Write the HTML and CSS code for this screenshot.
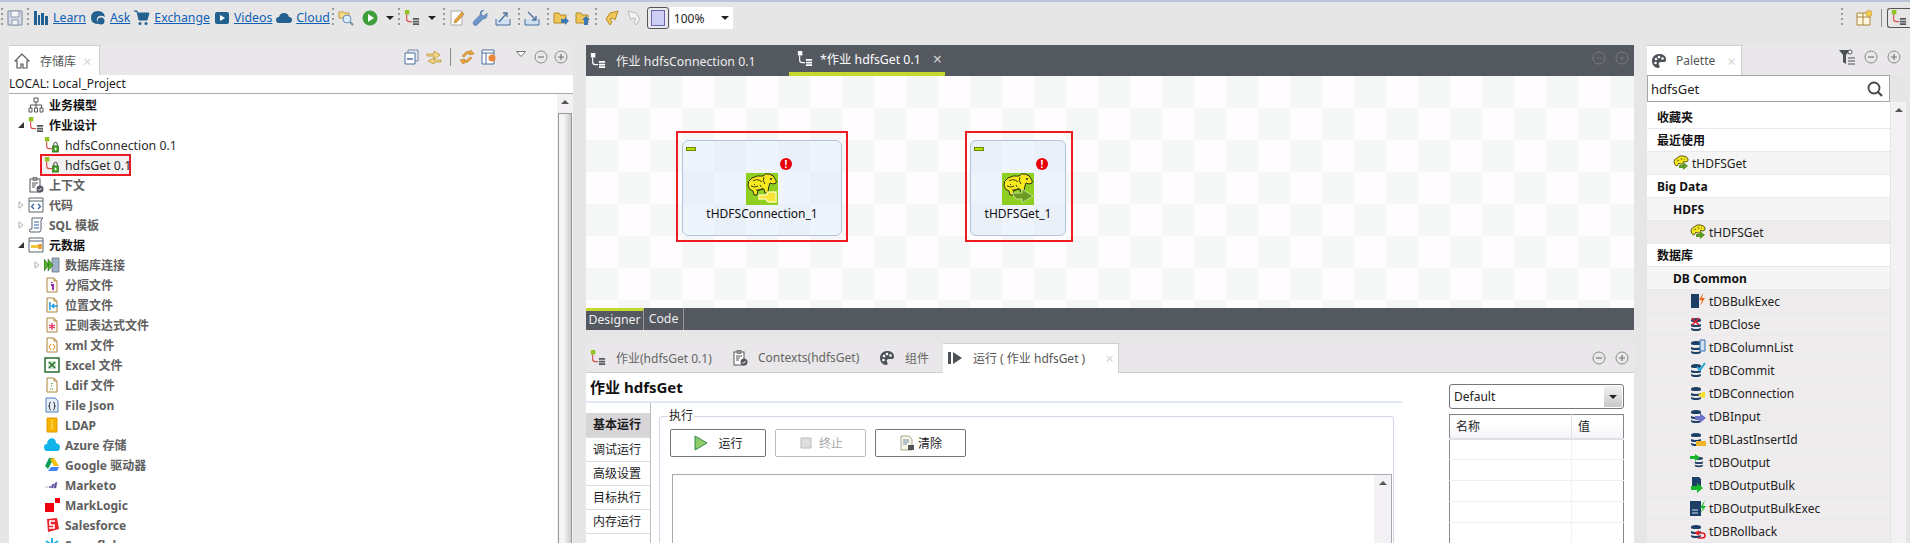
FILE: index.html
```html
<!DOCTYPE html>
<html lang="zh-CN">
  <head>
    <meta charset="utf-8" />
    <title>Talend Open Studio</title>
    <link rel="stylesheet" href="styles.css">
  </head>
  <body>
    <svg class="defs" width="0" height="0">
      <symbol id="job" viewBox="0 0 18 18">
        <rect x="1" y="0" width="5" height="5" fill="#8fc31f" />
        <path d="M3 5v5q0 3 3 3h3" fill="none" stroke="#d9534f" stroke-width="1.3" />
        <path d="M10 9h7v2h-7zM10 12h7v2h-7zM10 15h7v2h-7z" fill="#555a60" />
      </symbol>
      <symbol id="job-white" viewBox="0 0 18 18">
        <rect x="1" y="0" width="5" height="5" fill="#fff" />
        <path d="M3 5v5q0 3 3 3h3" fill="none" stroke="#fff" stroke-width="1.3" />
        <path d="M10 9h7v2h-7zM10 12h7v2h-7zM10 15h7v2h-7z" fill="#fff" />
      </symbol>
      <symbol id="job-lock" viewBox="0 0 18 18">
        <rect x="1" y="0" width="5" height="5" fill="#8fc31f" />
        <path d="M3 5v5q0 3 3 3h3" fill="none" stroke="#d9534f" stroke-width="1.3" />
        <path d="M11 10V8q0-2 2-2t2 2v2" fill="none" stroke="#333" />
        <rect x="9.500" y="10" width="7" height="7" fill="#3d9a1e" stroke="#1d5a0c" stroke-width=".6" />
        <rect x="12" y="12" width="2" height="3" fill="#fff" />
      </symbol>
      <symbol id="doc" viewBox="0 0 16 16">
        <path d="M3 1h7l3 3v11H3z" fill="#fffdf6" stroke="#a9863f" />
        <path d="M10 1v3h3" fill="#e8d6a8" stroke="#a9863f" />
      </symbol>
      <symbol id="db" viewBox="0 0 16 16">
        <path d="M1 4q0-2 5-2t5 2v1q0 1-5 1T1 5zM1 8q2 1 5 1t5-1v2q0 1-5 1t-5-1zM1 12q2 1 5 1t5-1v1q0 2-5 2t-5-2z" fill="#1d3f66" />
      </symbol>
      <symbol id="hadoop" viewBox="0 0 32 32">
        <path d="M2 13q-1-5 4-8 5-3 11-2 2-3 6-2 5 1 6 5 2 2 1 4-3 2-6 0l-1 3q-1 4-1 7h-3l-1-4-6 1-1 5H8l-1-4q-4-1-5-5z" fill="#f6ea1e" stroke="#2e2e12" stroke-width="1" />
        <path d="M7 8q5-3 9 1M5 13q4 2 7 0M10 17q4 1 7-2M18 4q-2 4 1 7M14 12l1 2M8 11l1 1" fill="none" stroke="#2e2e12" stroke-width=".9" />
        <circle cx="25" cy="6" r="1" fill="#222" />
      </symbol>
      <symbol id="hadoop-small" viewBox="0 0 16 16">
        <path d="M1 7q0-3 3-4 3-3 6-2 4 0 5 3 1 2-2 3-2 0-2-1l-1 3H7L6 8 4 11Q1 10 1 7z" fill="#f4e61c" stroke="#4b4b12" stroke-width=".9" />
        <path d="M4 6l2-1M8 3l1 2M11 4h1" stroke="#4b4b12" stroke-width=".8" />
        <path d="M6 10h4V7l5 4-5 4v-2H6z" fill="#5f9a26" />
      </symbol>
      <symbol id="minus" viewBox="0 0 14 14">
        <circle cx="7" cy="7" r="6" fill="none" stroke="#8b8b8b" />
        <path d="M4 7h6" stroke="#777" stroke-width="1.2" />
      </symbol>
      <symbol id="plus" viewBox="0 0 14 14">
        <circle cx="7" cy="7" r="6" fill="none" stroke="#8b8b8b" />
        <path d="M4 7h6M7 4v6" stroke="#777" stroke-width="1.2" />
      </symbol>
      <symbol id="palette" viewBox="0 0 16 16">
        <path d="M8 1C4 1 1 4 1 8s3 7 6 7c2 0 2-2 1-3s0-3 2-3h3c2 0 2-2 2-3 0-3-3-5-7-5z" fill="#4d5158" />
        <circle cx="5" cy="6" r="1.300" fill="#fff" /><circle cx="8" cy="4" r="1.300" fill="#fff" /><circle cx="11.500" cy="5.500" r="1.300" fill="#fff" /><circle cx="4.500" cy="10" r="1.300" fill="#fff" />
      </symbol>
      <symbol id="clip" viewBox="0 0 16 16">
        <rect x="2" y="2" width="10" height="13" fill="#fff" stroke="#555" />
        <rect x="5" y="0.500" width="4" height="3" fill="#999" stroke="#555" stroke-width=".6" />
        <path d="M4 6h6M4 8h4M4 10h3" stroke="#555" />
        <circle cx="12" cy="12" r="3.500" fill="#55595f" />
        <path d="M10.300 12l1.300 1.300 2-2.300" fill="none" stroke="#fff" stroke-width=".9" />
      </symbol>
      <symbol id="tri-open" viewBox="0 0 8 8"><path d="M7 1v6H1z" fill="#333" /></symbol>
      <symbol id="tri-closed" viewBox="0 0 8 10"><path d="M1.500 1l5 4-5 4z" fill="#fff" stroke="#999" /></symbol>
    </svg>

    <header class="toolbar">
      <i class="dots"></i>
      <svg class="ic" viewBox="0 0 16 16"><path d="M1 1h14v14H1z" fill="#d5dbe6" stroke="#7d8ba3" /><path d="M4 1h8v6H4zM5 10h6v5H5z" fill="#f2f4f8" stroke="#8c99ad" /></svg>
      <i class="dots"></i>
      <svg class="ic" viewBox="0 0 16 16"><path d="M1 1h3v14H1zM5 5h2v10H5zM8 3h3v12H8zM12 6h3v9h-3z" fill="#22608f" /></svg>
      <a class="tb-link">Learn</a>
      <svg class="ic" viewBox="0 0 16 16"><path d="M1 8q0-7 7-7 6 0 7 6-3-2-6-1-3 2-2 5l2 3Q1 14 1 8z" fill="#22608f" /><circle cx="11" cy="11" r="3.500" fill="#22608f" /></svg>
      <a class="tb-link">Ask</a>
      <svg class="ic" viewBox="0 0 16 16"><path d="M0 1h3l2 9h8l2-7H4" fill="#22608f" stroke="#22608f" /><circle cx="6" cy="13.500" r="1.500" fill="#22608f" /><circle cx="12" cy="13.500" r="1.500" fill="#22608f" /></svg>
      <a class="tb-link">Exchange</a>
      <svg class="ic" viewBox="0 0 16 16"><rect x="1" y="2" width="14" height="12" rx="2" fill="#22608f" /><path d="M6 5l5 3-5 3z" fill="#fff" /></svg>
      <a class="tb-link">Videos</a>
      <svg class="ic" viewBox="0 0 16 16"><path d="M3 13q-3 0-3-3t3-3q1-4 5-4t5 4q3 0 3 3t-3 3z" fill="#22608f" /></svg>
      <a class="tb-link">Cloud</a>
      <i class="dots tight"></i>
      <svg class="ic" viewBox="0 0 16 16"><path d="M1 2h5l1 1h4v5H1z" fill="#f5d98a" stroke="#c49a3a" /><circle cx="9" cy="9" r="4" fill="#d9ecfa" stroke="#6d8fb0" /><path d="M12 12l3 3" stroke="#6d8fb0" stroke-width="2" /></svg>
      <svg class="ic m4" viewBox="0 0 16 16"><circle cx="8" cy="8" r="7.500" fill="#3f9e3a" /><path d="M6 4l6 4-6 4z" fill="#fff" /></svg>
      <i class="caret m4"></i>
      <i class="dots"></i>
      <svg class="ic"><use href="#job" /></svg>
      <i class="caret m4"></i>
      <i class="dots m3"></i>
      <svg class="ic" viewBox="0 0 16 16"><path d="M2 1h11v14H2z" fill="#fff" stroke="#aaa" /><path d="M13 2l2 2-7 8-3 1 1-3z" fill="#e8a33a" stroke="#a86f1a" stroke-width=".6" /></svg>
      <svg class="ic m3" viewBox="0 0 16 16"><path d="M15 3l-3 3-2-1-1-2 3-3q-4 0-4 4v1L2 11q-2 2 0 4t4-1l5-5q5 0 4-6z" fill="#6d95c9" stroke="#4b6f9f" stroke-width=".5" /></svg>
      <svg class="ic m3" viewBox="0 0 16 16"><path d="M1 9v6h14V9" fill="#cfe0f3" stroke="#4b6f9f" /><path d="M4 12L12 3M8 3h4v4" fill="none" stroke="#4b6f9f" stroke-width="1.300" /></svg>
      <i class="dots m3"></i>
      <svg class="ic" viewBox="0 0 16 16"><path d="M1 9v6h14V9" fill="#cfe0f3" stroke="#4b6f9f" /><path d="M4 2l8 8M12 6v4H8" fill="none" stroke="#4b6f9f" stroke-width="1.300" /></svg>
      <i class="dots m3"></i>
      <svg class="ic" viewBox="0 0 16 16"><path d="M1 3h5l1 2h6v8H1z" fill="#f0c65a" stroke="#b5892a" /><path d="M8 9h4V7l4 4-4 4v-2H8z" fill="#3c78b5" /></svg>
      <svg class="ic m2" viewBox="0 0 16 16"><path d="M1 3h5l1 2h6v8H1z" fill="#f0c65a" stroke="#b5892a" /><path d="M11 6l4 4h-2v5h-4v-5H7z" fill="#3c78b5" /></svg>
      <i class="dots"></i>
      <svg class="ic m3" viewBox="0 0 16 16"><path d="M14 1L6 3 2 9l4 6 2-3-2-3 3-1 2 2z" fill="#f0c65a" stroke="#b5892a" /></svg>
      <svg class="ic m2" viewBox="0 0 16 16"><path d="M2 1l8 2 4 6-4 6-2-3 2-3-3-1-2 2z" fill="#f3f3f3" stroke="#bbb" /></svg>
      <span class="toggle"><i></i></span>
      <span class="zoom-combo">100%<i class="caret"></i></span>
      <span class="tb-end">
        <i class="dots"></i>
        <svg class="ic" viewBox="0 0 16 16"><path d="M1 3h13v12H1z" fill="#fff6dd" stroke="#a9863f" /><path d="M1 7h13M7 3v12" stroke="#a9863f" /><circle cx="13" cy="3.500" r="3" fill="#f5d050" stroke="#b5892a" stroke-width=".6" /></svg>
        <i class="tb-sep"></i>
        <span class="persp"><svg class="ic"><use href="#job" /></svg></span>
      </span>
    </header>

    <main class="workbench">
      <section class="repo">
        <div class="view-head">
          <div class="view-tab repo-tab">
            <svg class="ic" viewBox="0 0 16 16"><path d="M8 1L1 8h2v7h4v-4h2v4h4V8h2z" fill="#fff" stroke="#555" stroke-width="1.200" /></svg>
            <span>存储库</span>
            <span class="tab-x">×</span>
          </div>
          <div class="view-actions repo-actions">
            <svg class="ic" viewBox="0 0 16 16"><path d="M4 1h10v11H4z" fill="#dfe8f3" stroke="#7d8ba3" /><path d="M1 4h10v11H1z" fill="#fff" stroke="#4b6f9f" /><path d="M3 10h6" stroke="#4b6f9f" stroke-width="1.500" /></svg>
            <svg class="ic" viewBox="0 0 16 16"><path d="M1 5h7V2l6 4-6 4V7H1zM15 11H8V9l-6 3 6 3v-2h7z" fill="#f5d98a" stroke="#b5892a" stroke-width=".7" /></svg>
            <i class="tb-sep short"></i>
            <svg class="ic" viewBox="0 0 16 16"><path d="M12 1l3 4-5 1 1-2-3 1-3 3-2-1 4-4 4-1zM4 15l-3-4 5-1-1 2 3-1 3-3 2 1-4 4-4 1z" fill="#e8a33a" stroke="#a86f1a" stroke-width=".5" /></svg>
            <svg class="ic" viewBox="0 0 16 16"><path d="M1 1h12v14H1z" fill="#fff" stroke="#4b6f9f" /><path d="M1 4h12M5 4v11" stroke="#4b6f9f" /><circle cx="11" cy="9" r="3.500" fill="#e8833a" /></svg>
            <svg class="tri-menu" viewBox="0 0 10 6"><path d="M.5.500h9L5 5.500z" fill="#fff" stroke="#777" /></svg>
            <svg class="btn-ic"><use href="#minus" /></svg>
            <svg class="btn-ic"><use href="#plus" /></svg>
          </div>
        </div>
        <div class="repo-path">LOCAL: Local_Project</div>
        <div class="tree-wrap">
          <div class="tree">
            <div class="row l0"><i class="tw"></i><svg class="ic" viewBox="0 0 16 16"><path d="M6 1h4v4H6zM1 11h3v4H1zM6.500 11h3v4h-3zM12 11h3v4h-3zM8 5v3M2.500 11V8h11v3M8 8v3" fill="#fff" stroke="#555" /></svg><b>业务模型</b></div>
            <div class="row l0"><svg class="tw"><use href="#tri-open" /></svg><svg class="ic"><use href="#job" /></svg><b>作业设计</b></div>
            <div class="row l1"><i class="tw"></i><svg class="ic"><use href="#job-lock" /></svg><span>hdfsConnection 0.1</span></div>
            <div class="row l1"><i class="tw"></i><span class="marked"><svg class="ic"><use href="#job-lock" /></svg><span>hdfsGet 0.1</span></span></div>
            <div class="row l0 dim"><i class="tw"></i><svg class="ic"><use href="#clip" /></svg><b>上下文</b></div>
            <div class="row l0 dim"><svg class="tw"><use href="#tri-closed" /></svg><svg class="ic" viewBox="0 0 16 16"><path d="M1 1h14v14H1z" fill="#fff" stroke="#5a6470" /><path d="M1 4h14" stroke="#5a6470" /><path d="M6 7L3.500 9.500 6 12M10 7l2.500 2.500L10 12" fill="none" stroke="#2a5f9e" stroke-width="1.200" /></svg><b>代码</b></div>
            <div class="row l0 dim"><svg class="tw"><use href="#tri-closed" /></svg><svg class="ic" viewBox="0 0 16 16"><path d="M4 1h11l-2 2v10q0 2-2 2H2q-1-1 0-3h2z" fill="#fff" stroke="#5a6470" /><path d="M6 5h5M6 8h5M6 11h5" stroke="#2a5f9e" /></svg><b>SQL 模板</b></div>
            <div class="row l0"><svg class="tw"><use href="#tri-open" /></svg><svg class="ic" viewBox="0 0 16 16"><path d="M1 1h14v14H1z" fill="#fff" stroke="#5a6470" /><path d="M1 4h14" stroke="#5a6470" /><path d="M3 8h7v3H3z" fill="#f5c53a" /><path d="M10 7h4v5h-4z" fill="#e8a33a" /></svg><b>元数据</b></div>
            <div class="row l1 dim"><svg class="tw"><use href="#tri-closed" /></svg><svg class="ic" viewBox="0 0 16 16"><path d="M8 1h7v14H8z" fill="#9fb2c9" stroke="#5a6470" stroke-width=".7" /><path d="M0 2l5 6-5 6zM4 2l5 6-5 6z" fill="#4fae2e" stroke="#1d5a0c" stroke-width=".5" /></svg><b>数据库连接</b></div>
            <div class="row l1 dim"><i class="tw"></i><svg class="ic" viewBox="0 0 16 16"><use href="#doc" /><path d="M8 5v1M7 8h2v5" fill="none" stroke="#8a1ea8" stroke-width="1.800" /></svg><b>分隔文件</b></div>
            <div class="row l1 dim"><i class="tw"></i><svg class="ic" viewBox="0 0 16 16"><use href="#doc" /><path d="M6 5v8M14 9H8m2-2-2 2 2 2" fill="none" stroke="#1e9be0" stroke-width="1.500" /></svg><b>位置文件</b></div>
            <div class="row l1 dim"><i class="tw"></i><svg class="ic" viewBox="0 0 16 16"><use href="#doc" /><path d="M8 6v7M5 8l6 3M5 11l6-3" stroke="#e0245e" stroke-width="1.200" /></svg><b>正则表达式文件</b></div>
            <div class="row l1 dim"><i class="tw"></i><svg class="ic" viewBox="0 0 16 16"><use href="#doc" /><path d="M7 7L5 10l2 3M9 7l2 3-2 3" fill="none" stroke="#d08a1e" /></svg><b>xml 文件</b></div>
            <div class="row l1 dim"><i class="tw"></i><svg class="ic" viewBox="0 0 16 16"><path d="M1 1h14v14H1z" fill="#fff" stroke="#2c6e2f" stroke-width="1.500" /><path d="M4 4h8v8H4z" fill="#cfe6cf" /><path d="M5 5l6 6M11 5l-6 6" stroke="#2c6e2f" stroke-width="1.600" /></svg><b>Excel 文件</b></div>
            <div class="row l1 dim"><i class="tw"></i><svg class="ic" viewBox="0 0 16 16"><use href="#doc" /><path d="M8 6v1M7 9h2M6 12h4" stroke="#2c8a2f" stroke-width="1.200" stroke-dasharray="1 1" /></svg><b>Ldif 文件</b></div>
            <div class="row l1 dim"><i class="tw"></i><svg class="ic" viewBox="0 0 16 16"><path d="M2 1h9l3 3v11H2z" fill="#e4edf8" stroke="#4b7fc0" /><path d="M7 5Q5 5 5.500 8T4.500 9q1 0 1 2t1.500 2M9 5q2 0 1.500 3t1 1q-1 0-1 2T9 13" fill="none" stroke="#333" stroke-width=".9" /></svg><b>File Json</b></div>
            <div class="row l1 dim"><i class="tw"></i><svg class="ic" viewBox="0 0 16 16"><path d="M3 1h10v14H3z" fill="#f7b500" stroke="#e09a00" /><path d="M8 3v10" stroke="#ffe082" stroke-dasharray="1 1" stroke-width="2" /></svg><b>LDAP</b></div>
            <div class="row l1 dim"><i class="tw"></i><svg class="ic" viewBox="0 0 16 16"><path d="M3 14q-3 0-3-4 0-3 3-3 0-5 5-6 4 1 4 5 4 1 4 4 0 4-3 4z" fill="#12b5ea" /></svg><b>Azure 存储</b></div>
            <div class="row l1 dim"><i class="tw"></i><svg class="ic" viewBox="0 0 16 16"><path d="M5 1h5L4 12 1 9z" fill="#0f9d58" /><path d="M10 1l5 8h-5L6 2z" fill="#f4c20d" /><path d="M4 14l3-4h8l-2 4z" fill="#4285f4" /></svg><b>Google 驱动器</b></div>
            <div class="row l1 dim"><i class="tw"></i><svg class="ic" viewBox="0 0 16 16"><path d="M1 10h3M5 9.500h2v1H5zM8 7.500l2-.5-1 4H7.500zM11 6l2-1-1 6h-2z" fill="#5c4c9f" stroke="#5c4c9f" stroke-width=".4" /></svg><b>Marketo</b></div>
            <div class="row l1 dim"><i class="tw"></i><svg class="ic" viewBox="0 0 16 16"><path d="M1 6h9v9H1zM11 1h5v5h-5z" fill="#f0000f" /></svg><b>MarkLogic</b></div>
            <div class="row l1 dim"><i class="tw"></i><svg class="ic" viewBox="0 0 16 16"><path d="M3 2l10-1 2 11-11 3z" fill="#e8232a" /><path d="M11 4H6v4h4v3H5" fill="none" stroke="#fff" stroke-width="1.600" /></svg><b>Salesforce</b></div>
            <div class="row l1 dim"><i class="tw"></i><svg class="ic" viewBox="0 0 16 16"><path d="M8 1v14M2 4l12 8M14 4L2 12" stroke="#29b5e8" stroke-width="2" /></svg><b>Snowflake</b></div>
          </div>
          <div class="vscroll">
            <i class="up"></i>
            <i class="thumb"></i>
          </div>
        </div>
      </section>

      <section class="center">
        <div class="editor">
          <div class="editor-tabs">
            <div class="ed-tab">
              <svg class="ic"><use href="#job-white" /></svg>
              <span>作业 hdfsConnection 0.1</span>
            </div>
            <div class="ed-tab active">
              <svg class="ic"><use href="#job-white" /></svg>
              <span>*作业 hdfsGet 0.1</span>
              <span class="ed-x">×</span>
            </div>
            <div class="ed-actions">
              <svg class="btn-ic"><use href="#minus" /></svg>
              <svg class="btn-ic"><use href="#plus" /></svg>
            </div>
          </div>
          <div class="canvas">
            <div class="mark mark-conn">
              <div class="node">
                <i class="node-bar"></i>
                <i class="node-err">!</i>
                <svg class="node-icon" viewBox="0 0 32 32">
                  <rect width="32" height="32" fill="#8ecf1f" />
                  <use href="#hadoop" width="32" height="32" />
                  <path d="M13 22h7l2-3h8v10h-8l-2-3h-7z" fill="#f6e43a" stroke="#fdf7a8" stroke-width="1.500" />
                </svg>
                <span class="node-label">tHDFSConnection_1</span>
              </div>
            </div>
            <div class="mark mark-get">
              <div class="node">
                <i class="node-bar"></i>
                <i class="node-err">!</i>
                <svg class="node-icon" viewBox="0 0 32 32">
                  <rect width="32" height="32" fill="#8ecf1f" />
                  <use href="#hadoop" width="32" height="32" />
                  <path d="M10 20h10v-4l11 7-11 7v-4h-6z" fill="#6b9b22" stroke="#c5e38a" />
                </svg>
                <span class="node-label">tHDFSGet_1</span>
              </div>
            </div>
          </div>
          <div class="editor-foot">
            <span class="foot-tab active">Designer</span>
            <span class="foot-tab code">Code</span>
          </div>
        </div>

        <div class="run-view">
          <div class="view-head run-head">
            <div class="run-tab">
              <svg class="ic"><use href="#job" /></svg>
              <span>作业(hdfsGet 0.1)</span>
            </div>
            <div class="run-tab">
              <svg class="ic"><use href="#clip" /></svg>
              <span>Contexts(hdfsGet)</span>
            </div>
            <div class="run-tab">
              <svg class="ic"><use href="#palette" /></svg>
              <span>组件</span>
            </div>
            <div class="view-tab run-active">
              <svg class="ic" viewBox="0 0 16 16"><path d="M1 2h3v12H1zM6 2l9 6-9 6z" fill="#4d5158" /></svg>
              <span>运行 ( 作业 hdfsGet )</span>
              <span class="tab-x">×</span>
            </div>
            <div class="view-actions run-actions">
              <svg class="btn-ic"><use href="#minus" /></svg>
              <svg class="btn-ic"><use href="#plus" /></svg>
            </div>
          </div>
          <div class="run-body">
            <div class="run-left">
              <h2 class="run-title">作业 hdfsGet</h2>
              <div class="run-split">
                <ul class="side-tabs">
                  <li class="selected">基本运行</li>
                  <li>调试运行</li>
                  <li>高级设置</li>
                  <li>目标执行</li>
                  <li>内存运行</li>
                </ul>
                <fieldset class="exec">
                  <legend>执行</legend>
                  <div class="exec-btns">
                    <button class="btn btn-run"><svg class="ic" viewBox="0 0 16 16"><path d="M2 1l12 7-12 7z" fill="#8ecb6a" stroke="#2f8a4e" /></svg>运行</button>
                    <button class="btn btn-stop" disabled><svg class="ic" viewBox="0 0 16 16"><path d="M3 3h10v10H3z" fill="#ddd" stroke="#bbb" /></svg>终止</button>
                    <button class="btn btn-clear"><svg class="ic" viewBox="0 0 16 16"><path d="M2 1h8l3 3v11H2z" fill="#f8f4e6" stroke="#a9a48f" /><path d="M4 5h6M4 7h6M4 9h4" stroke="#6d8fb0" /><path d="M9 10h6v5H9z" fill="#555" /></svg>清除</button>
                  </div>
                  <div class="console">
                    <div class="vscroll thin"><i class="up"></i></div>
                  </div>
                </fieldset>
              </div>
            </div>
            <div class="run-right">
              <div class="combo">Default<i class="combo-btn"><i class="caret"></i></i></div>
              <table class="ctx-table">
                <tr><th class="c-name">名称</th><th>值</th></tr>
                <tr><td></td><td></td></tr>
                <tr><td></td><td></td></tr>
                <tr><td></td><td></td></tr>
                <tr><td></td><td></td></tr>
                <tr><td></td><td></td></tr>
              </table>
            </div>
          </div>
        </div>
      </section>

      <section class="palette">
        <div class="view-head">
          <div class="view-tab pal-tab">
            <svg class="ic"><use href="#palette" /></svg>
            <span>Palette</span>
            <span class="tab-x">×</span>
          </div>
          <div class="view-actions pal-actions">
            <svg class="ic" viewBox="0 0 16 16"><path d="M0 1h11L7 6v9L4 13V6z" fill="#4d5158" /><circle cx="11" cy="3" r="2" fill="#fff" stroke="#4d5158" /><path d="M9 9h7M9 12h7M9 15h7" stroke="#4d5158" /></svg>
            <svg class="btn-ic"><use href="#minus" /></svg>
            <svg class="btn-ic"><use href="#plus" /></svg>
          </div>
        </div>
        <div class="pal-search">
          <span>hdfsGet</span>
          <svg class="ic" viewBox="0 0 16 16"><circle cx="7" cy="7" r="5.500" fill="none" stroke="#444" stroke-width="1.800" /><path d="M11 11l4 4" stroke="#444" stroke-width="2.200" /></svg>
        </div>
        <div class="pal-wrap">
          <div class="pal-list">
            <div class="pal-row"><b>收藏夹</b></div>
            <div class="pal-row"><b>最近使用</b></div>
            <div class="pal-row item-soft p1"><svg class="ic"><use href="#hadoop-small" /></svg>tHDFSGet</div>
            <div class="pal-row"><b>Big Data</b></div>
            <div class="pal-row p1 soft"><b>HDFS</b></div>
            <div class="pal-row item p2"><svg class="ic"><use href="#hadoop-small" /></svg>tHDFSGet</div>
            <div class="pal-row"><b>数据库</b></div>
            <div class="pal-row p1 soft"><b>DB Common</b></div>
            <div class="pal-row item p2"><svg class="ic" viewBox="0 0 16 16"><path d="M1 1h8v14H1z" fill="#1d3f66" /><path d="M13 0l-4 7h3l-2 6 5-8h-3z" fill="#ee6a1f" /></svg>tDBBulkExec</div>
            <div class="pal-row item p2"><svg class="ic" viewBox="0 0 16 16"><use href="#db" /><path d="M2 2l7 7M9 2L2 9" stroke="#e0202a" stroke-width="1.500" /></svg>tDBClose</div>
            <div class="pal-row item p2"><svg class="ic" viewBox="0 0 16 16"><use href="#db" /><path d="M10 1h5v11h-5z" fill="#cfe0f3" stroke="#2f6fae" /></svg>tDBColumnList</div>
            <div class="pal-row item p2"><svg class="ic" viewBox="0 0 16 16"><use href="#db" /><path d="M7 5l3 3 5-7" fill="none" stroke="#2aa4d8" stroke-width="2" /></svg>tDBCommit</div>
            <div class="pal-row item p2"><svg class="ic" viewBox="0 0 16 16"><use href="#db" /><path d="M8 10l5-3h2v6h-2z" fill="#f5e02a" /></svg>tDBConnection</div>
            <div class="pal-row item p2"><svg class="ic" viewBox="0 0 16 16"><use href="#db" /><path d="M5 8h5V5l6 5-6 5v-3H5z" fill="#6f72c9" /></svg>tDBInput</div>
            <div class="pal-row item p2"><svg class="ic" viewBox="0 0 16 16"><use href="#db" /><path d="M6 10h10v5H6z" fill="#f0b428" /></svg>tDBLastInsertId</div>
            <div class="pal-row item p2"><svg class="ic" viewBox="0 0 16 16"><g transform="translate(4 1)"><use href="#db" width="13" height="13" /></g><path d="M0 2h5V0l5 3.500L5 7V5H0z" fill="#18b82a" /></svg>tDBOutput</div>
            <div class="pal-row item p2"><svg class="ic" viewBox="0 0 16 16"><path d="M2 0h7l2 2v10H2z" fill="#1d3f66" /><path d="M1 9h6V6l6 5-6 5v-3H1z" fill="#18b82a" /></svg>tDBOutputBulk</div>
            <div class="pal-row item p2"><svg class="ic" viewBox="0 0 16 16"><path d="M0 1h11v15H0z" fill="#1d3f66" /><path d="M2 10h6M2 13h6" stroke="#cfe0f3" /><path d="M15 0l-5 8h3l-3 6 6-8h-3z" fill="#18b82a" /></svg>tDBOutputBulkExec</div>
            <div class="pal-row item p2"><svg class="ic" viewBox="0 0 16 16"><use href="#db" /><path d="M7 10h5q3 0 3 2.500T12 15H8M9 8l-3 2 3 2" fill="none" stroke="#e0202a" stroke-width="1.600" /></svg>tDBRollback</div>
          </div>
          <div class="vscroll pal-scroll"><i class="up"></i></div>
        </div>
      </section>
    </main>
  </body>
</html>
```

FILE: styles.css
```css
* {
  box-sizing: border-box;
}

html,
body {
  width: 1910px;
  height: 543px;
  margin: 0;
  overflow: hidden;
}

body {
  background: #e6e6e6;
  color: #1c1c1c;
  font-family: "Noto Sans", "Noto Sans CJK SC", sans-serif;
  font-size: 12px;
}

i {
  font-style: normal;
}

.defs {
  position: absolute;
}

.ic {
  flex: none;
  width: 16px;
  height: 16px;
}

.btn-ic {
  flex: none;
  width: 14px;
  height: 14px;
}

/* toolbar */
.toolbar {
  display: flex;
  align-items: center;
  gap: 4px;
  height: 45px;
  padding: 0 0 11px 1px;
  border-top: 2px solid #bcc5da;
}

.dots {
  flex: none;
  width: 2px;
  height: 20px;
  background: repeating-linear-gradient(#9a9a9a 0 2px, transparent 2px 5px);
}

.dots.tight {
  margin-left: -2px;
}

.tb-link {
  color: #0f5fb5;
  font-size: 12.300px;
  line-height: 16px;
  text-decoration: underline;
}

.m2 {
  margin-left: 2px;
}

.m3 {
  margin-left: 3px;
}

.m4 {
  margin-left: 4px;
}

.caret {
  display: block;
  flex: none;
  width: 0;
  height: 0;
  border-top: 4px solid #222;
  border-right: 4px solid transparent;
  border-left: 4px solid transparent;
}

.toggle {
  display: flex;
  flex: none;
  align-items: center;
  justify-content: center;
  width: 22px;
  height: 22px;
  margin-left: 1px;
  border: 1px solid #555;
  border-radius: 3px;
  background: #e9e9ee;
}

.toggle i {
  width: 14px;
  height: 16px;
  border: 1px solid #6a6ab0;
  background: #cfcff5;
}

.zoom-combo {
  display: flex;
  flex: none;
  align-items: center;
  justify-content: space-between;
  width: 63px;
  height: 22px;
  margin-left: -3px;
  padding: 0 4px;
  background: #fff;
}

.tb-end {
  display: flex;
  align-items: center;
  gap: 9px;
  margin-left: auto;
}

.tb-end .ic {
  margin-left: 4px;
}

.persp .ic {
  margin-left: 0;
}

.tb-sep {
  flex: none;
  width: 1px;
  height: 18px;
  background: #8c8c8c;
}

.tb-sep.short {
  margin: 0 2px;
}

.persp {
  display: flex;
  align-items: center;
  width: 23px;
  height: 20px;
  margin-left: -4px;
  padding-left: 3px;
  border: 1px solid #555;
  border-right: 0;
  border-radius: 3px 0 0 3px;
}

/* layout */
.workbench {
  display: flex;
  height: 498px;
  padding-left: 9px;
}

.repo {
  display: flex;
  flex: none;
  flex-direction: column;
  width: 564px;
}

.center {
  display: flex;
  flex: none;
  flex-direction: column;
  width: 1048px;
  margin-left: 13px;
}

.palette {
  display: flex;
  flex: none;
  flex-direction: column;
  width: 260px;
  margin-left: 13px;
}

.view-head {
  display: flex;
  flex: none;
  height: 30px;
  background: #e9e7e9;
}

.view-tab {
  display: flex;
  flex: none;
  align-items: center;
  height: 30px;
  border: 1px solid #cfcfcf;
  border-width: 1px 1px 0 0;
  background: #fff;
  color: #555;
  white-space: nowrap;
}

.tab-x {
  color: #d5d5d5;
  font-size: 15px;
}

.view-actions {
  display: flex;
  align-items: center;
  margin-left: auto;
  height: 24px;
}

/* repository */
.repo-tab {
  width: 91px;
  padding-left: 5px;
  gap: 10px;
}

.repo-tab .tab-x {
  margin-left: -3px;
}

.repo-actions {
  gap: 6px;
  padding-right: 5px;
}

.tri-menu {
  width: 10px;
  height: 6px;
  margin: 0 2px 6px 13px;
}

.repo-path {
  flex: none;
  height: 19px;
  border-bottom: 1px solid #a9a9a9;
  background: #fff;
  line-height: 18px;
}

.tree-wrap {
  display: flex;
  flex: 1;
  min-height: 0;
  background: #fff;
  overflow: hidden;
}

.tree {
  flex: 1;
  padding-top: 1px;
}

.row {
  display: flex;
  align-items: center;
  height: 20px;
  font-size: 12px;
  white-space: nowrap;
}

.row .ic {
  margin-right: 5px;
}

.row b {
  color: #111;
}

.row.dim b {
  color: #606060;
}

.row span {
  color: #2a2a2a;
  font-size: 12.300px;
}

.tw {
  flex: none;
  width: 8px;
  height: 8px;
  margin-right: 3px;
}

.l0 {
  padding-left: 8px;
}

.l1 {
  padding-left: 24px;
}

.row .marked {
  display: flex;
  align-items: center;
  width: 87px;
  height: 18px;
  margin-left: -2px;
  padding-left: 2px;
  outline: 2px solid #ed1c24;
  background: #f1f1f1;
}

.vscroll {
  flex: none;
  position: relative;
  width: 16px;
  background: #f3f1f3;
}

.vscroll .up {
  display: block;
  width: 0;
  margin: 6px auto 0;
  border-right: 4px solid transparent;
  border-bottom: 4px solid #555;
  border-left: 4px solid transparent;
}

.vscroll .thumb {
  display: block;
  height: 440px;
  margin: 9px 1px 0 1px;
  border: 1px solid #999;
  background: linear-gradient(90deg, #f6f5f6 40%, #c9c9cf);
}

/* editor */
.editor {
  display: flex;
  flex: none;
  flex-direction: column;
  height: 285px;
}

.editor-tabs {
  display: flex;
  flex: none;
  height: 31px;
  background: #54585f;
  color: #eee;
  font-size: 12.300px;
}

.ed-tab {
  display: flex;
  align-items: center;
  gap: 10px;
  width: 203px;
  padding-left: 4px;
  white-space: nowrap;
}

.ed-tab.active {
  gap: 7px;
  width: 156px;
  padding-left: 8px;
  border-bottom: 4px solid #c4d82e;
  color: #fff;
}

.ed-x {
  margin-left: 5px;
  color: #d0d0d0;
  font-size: 16px;
}

.ed-actions {
  display: flex;
  align-items: center;
  gap: 9px;
  margin-left: auto;
  padding-right: 5px;
  padding-bottom: 6px;
}

.ed-actions .btn-ic {
  opacity: .7;
}

.canvas {
  position: relative;
  flex: 1;
  background: repeating-conic-gradient(#fffcff 0 25%, #f5f7f6 0 50%) 0 0 / 64px 64px;
}

.mark {
  position: absolute;
  top: 55px;
  height: 111px;
  padding-top: 7px;
  border: 2px solid #ed1c24;
}

.mark-conn {
  left: 90px;
  width: 172px;
  padding-left: 4px;
}

.mark-get {
  left: 379px;
  width: 108px;
  padding-left: 3px;
}

.node {
  position: relative;
  display: flex;
  flex-direction: column;
  align-items: center;
  height: 96px;
  padding-top: 32px;
  border: 1px solid #b4c6dc;
  border-radius: 6px;
  background: rgba(222, 234, 250, .5);
}

.mark-conn .node {
  width: 160px;
}

.mark-get .node {
  width: 96px;
}

.node-bar {
  position: absolute;
  top: 6px;
  left: 3px;
  width: 10px;
  height: 4px;
  border: 1px solid #6f8a00;
  background: #b5e200;
}

.node-err {
  position: absolute;
  top: 17px;
  width: 12px;
  height: 12px;
  border-radius: 50%;
  background: #e8000b;
  color: #fff;
  font-size: 10px;
  font-weight: 700;
  line-height: 12px;
  text-align: center;
}

.mark-conn .node-err {
  right: 49px;
}

.mark-get .node-err {
  right: 17px;
}

.node-icon {
  flex: none;
  width: 32px;
  height: 32px;
}

.node-label {
  color: #111;
  font-size: 12px;
  line-height: 18px;
  white-space: nowrap;
}

.editor-foot {
  display: flex;
  flex: none;
  height: 22px;
  background: #54585f;
  color: #eee;
  font-size: 12.300px;
}

.foot-tab {
  height: 22px;
  border-right: 1px solid #999;
  line-height: 21px;
  text-align: center;
}

.foot-tab.active {
  width: 58px;
  border-top: 3px solid #c4d82e;
  line-height: 17px;
}

.foot-tab.code {
  width: 40px;
}

/* run view */
.run-view {
  display: flex;
  flex: 1;
  flex-direction: column;
  margin-top: 13px;
  min-height: 0;
}

.run-head {
  align-items: center;
  border-bottom: 1px solid #cfcfcf;
}

.run-tab {
  display: flex;
  flex: none;
  align-items: center;
  gap: 10px;
  color: #666;
  white-space: nowrap;
}

.run-tab:nth-child(1) {
  width: 146px;
  padding-left: 4px;
}

.run-tab:nth-child(2) {
  width: 147px;
}

.run-tab:nth-child(3) {
  width: 64px;
}

.run-active {
  gap: 10px;
  width: 176px;
  padding-left: 4px;
}

.run-active .tab-x {
  margin-left: 10px;
}

.run-actions {
  gap: 9px;
  padding-right: 5px;
}

.run-body {
  display: flex;
  flex: 1;
  min-height: 0;
  background: #fff;
}

.run-left {
  display: flex;
  flex: none;
  flex-direction: column;
  width: 816px;
}

.run-title {
  flex: none;
  height: 30px;
  margin: 0;
  padding-left: 4px;
  border-bottom: 2px solid #e0e7f3;
  color: #111;
  font-size: 15px;
  font-weight: 700;
  line-height: 28px;
}

.run-split {
  display: flex;
  flex: 1;
  min-height: 0;
}

.side-tabs {
  flex: none;
  width: 65px;
  margin: 0;
  padding: 10px 0 0;
  border-right: 1px solid #bdbdbd;
  list-style: none;
}

.side-tabs li {
  height: 24px;
  padding-left: 7px;
  border-bottom: 1px solid #dedede;
  line-height: 23px;
  white-space: nowrap;
}

.side-tabs .selected {
  height: 25px;
  background: #d8d5d8;
  font-weight: 700;
}

.exec {
  width: 735px;
  min-width: 0;
  height: 200px;
  margin: 5px 0 0 8px;
  padding: 5px 0 0 10px;
  border: 1px solid #ced7e4;
  border-bottom: 0;
  border-radius: 4px 4px 0 0;
}

.exec legend {
  margin-left: -2px;
  padding: 0 1px;
  line-height: 16px;
}

.exec-btns {
  display: flex;
  gap: 9px;
}

.btn {
  display: flex;
  align-items: center;
  justify-content: center;
  height: 28px;
  padding: 0;
  border: 1px solid #777;
  border-radius: 2px;
  background: #fff;
  color: #222;
  font: inherit;
}

.btn-run {
  gap: 9px;
  width: 96px;
}

.btn-stop {
  gap: 5px;
  width: 91px;
  border-color: #bbb;
  color: #a8a8a8;
}

.btn-clear {
  gap: 3px;
  width: 91px;
}

.console {
  display: flex;
  justify-content: flex-end;
  width: 720px;
  height: 80px;
  margin: 17px 0 0 2px;
  border: 1px solid #a8a8b0;
  border-bottom: 0;
}

.vscroll.thin {
  width: 17px;
}

.run-right {
  flex: none;
  width: 175px;
  margin-left: 47px;
  padding-top: 11px;
}

.combo {
  display: flex;
  align-items: center;
  justify-content: space-between;
  height: 25px;
  padding: 1px 1px 1px 4px;
  border: 1px solid #777;
  border-radius: 3px;
}

.combo-btn {
  display: flex;
  align-items: center;
  justify-content: center;
  width: 18px;
  height: 21px;
  background: linear-gradient(#f2f2f2, #c8c8c8);
}

.ctx-table {
  width: 175px;
  height: 125px;
  margin-top: 5px;
  border-collapse: collapse;
  border: 1px solid #85858d;
  table-layout: fixed;
}

.ctx-table th {
  height: 24px;
  padding: 0 0 0 6px;
  border-bottom: 2px solid #e2dfe2;
  background: linear-gradient(#fff 30%, #f4f4f8);
  font-weight: 400;
  text-align: left;
}

.ctx-table th.c-name {
  width: 122px;
  border-right: 1px solid #e2dfe2;
}

.ctx-table td {
  height: 21px;
  border-bottom: 1px solid #efeff2;
}

.ctx-table td:first-child {
  border-right: 1px solid #eef2fa;
}

/* palette */
.pal-tab {
  gap: 9px;
  width: 95px;
  padding-left: 4px;
}

.pal-tab .tab-x {
  margin-left: 3px;
}

.pal-actions {
  gap: 9px;
  padding-right: 6px;
}

.pal-search {
  display: flex;
  flex: none;
  align-items: center;
  justify-content: space-between;
  width: 243px;
  height: 27px;
  padding: 0 6px 0 3px;
  border: 1px solid #a5a5ad;
  background: #fff;
  font-size: 13px;
}

.pal-wrap {
  display: flex;
  flex: 1;
  min-height: 0;
  overflow: hidden;
}

.pal-list {
  flex: none;
  width: 243px;
  padding-top: 4px;
  background: #fff;
}

.pal-row {
  display: flex;
  align-items: center;
  height: 23px;
  padding-left: 10px;
  border-bottom: 1px solid #e8e8ee;
  color: #222;
  white-space: nowrap;
}

.pal-row b {
  color: #111;
}

.pal-row .ic {
  margin-right: 3px;
}

.pal-row.p1 {
  padding-left: 26px;
}

.pal-row.p2 {
  padding-left: 43px;
}

.pal-row.soft,
.pal-row.item-soft {
  background: #f5f5f5;
}

.pal-row.item {
  background: #efecee;
}

.pal-scroll {
  width: 15px;
  margin-left: 1px;
}
```
